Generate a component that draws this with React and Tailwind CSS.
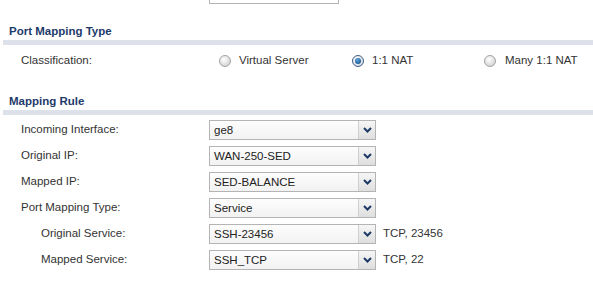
import React from 'react'

const Radio = ({ checked }) => (
  <span
    className={
      'relative inline-block h-[12px] w-[12px] rounded-full border ' +
      (checked
        ? 'border-[#3d5f86] bg-[radial-gradient(circle_at_40%_35%,#ffffff,#c9d0d8)]'
        : 'border-[#a3a3a3] bg-[radial-gradient(circle_at_40%_35%,#ffffff,#c8c8c8)]')
    }
  >
    {checked && (
      <span className="absolute left-[2px] top-[2px] h-[6px] w-[6px] rounded-full bg-[radial-gradient(circle_at_40%_35%,#5aa7e0,#0b3f74)]" />
    )}
  </span>
)

const Select = ({ value }) => (
  <div className="flex h-[20px] w-[167px] border border-[#b4b4b4] bg-[linear-gradient(#fdfdfd,#f2f2f2)]">
    <div className="flex-1 pl-[4px] text-[11.5px] leading-[18px] text-[#222]">{value}</div>
    <div className="flex w-[17px] items-center justify-center border-l border-[#cfcfcf] bg-[linear-gradient(#f6f6f6,#dedede)]">
      <svg width="9" height="6" viewBox="0 0 9 6">
        <path d="M1 1 L4.5 4.5 L8 1" fill="none" stroke="#1d3a66" strokeWidth="2" />
      </svg>
    </div>
  </div>
)

const Row = ({ label, value, extra, indent }) => (
  <div className="flex h-[20px] items-center">
    <div className={'text-[11.5px] text-[#333] ' + (indent ? 'w-[188px] pl-[20px]' : 'w-[188px]')}>
      {label}
    </div>
    <Select value={value} />
    {extra && <div className="ml-[7px] text-[11.5px] text-[#333]">{extra}</div>}
  </div>
)

const Header = ({ title }) => (
  <div>
    <div className="pl-[9px] text-[11.5px] font-bold leading-[14px] text-[#1e3a6b]">{title}</div>
    <div className="ml-[3px] mt-[2px] h-[5px] bg-[#dde2ea]" />
  </div>
)

export default function App() {
  return (
    <div className="h-[293px] w-[593px] overflow-hidden bg-white font-['Liberation_Sans',Arial,sans-serif]">
      <div className="ml-[209px] h-[4px] w-[130px] border border-t-0 border-[#b4b4b4]" />

      <div className="mt-[20px]">
        <Header title="Port Mapping Type" />
      </div>

      <div className="mt-[9px] flex h-[14px] items-center pl-[21px] text-[11.5px] text-[#333]">
        <div className="w-[198px]">Classification:</div>
        <div className="flex w-[133px] items-center gap-[8px]">
          <Radio />
          <span>Virtual Server</span>
        </div>
        <div className="flex w-[132px] items-center gap-[8px]">
          <Radio checked />
          <span>1:1 NAT</span>
        </div>
        <div className="flex items-center gap-[9px]">
          <Radio />
          <span>Many 1:1 NAT</span>
        </div>
      </div>

      <div className="mt-[26px]">
        <Header title="Mapping Rule" />
      </div>

      <div className="mt-[5px] flex flex-col gap-[6px] pl-[21px]">
        <Row label="Incoming Interface:" value="ge8" />
        <Row label="Original IP:" value="WAN-250-SED" />
        <Row label="Mapped IP:" value="SED-BALANCE" />
        <Row label="Port Mapping Type:" value="Service" />
        <Row label="Original Service:" value="SSH-23456" extra="TCP, 23456" indent />
        <Row label="Mapped Service:" value="SSH_TCP" extra="TCP, 22" indent />
      </div>
    </div>
  )
}
